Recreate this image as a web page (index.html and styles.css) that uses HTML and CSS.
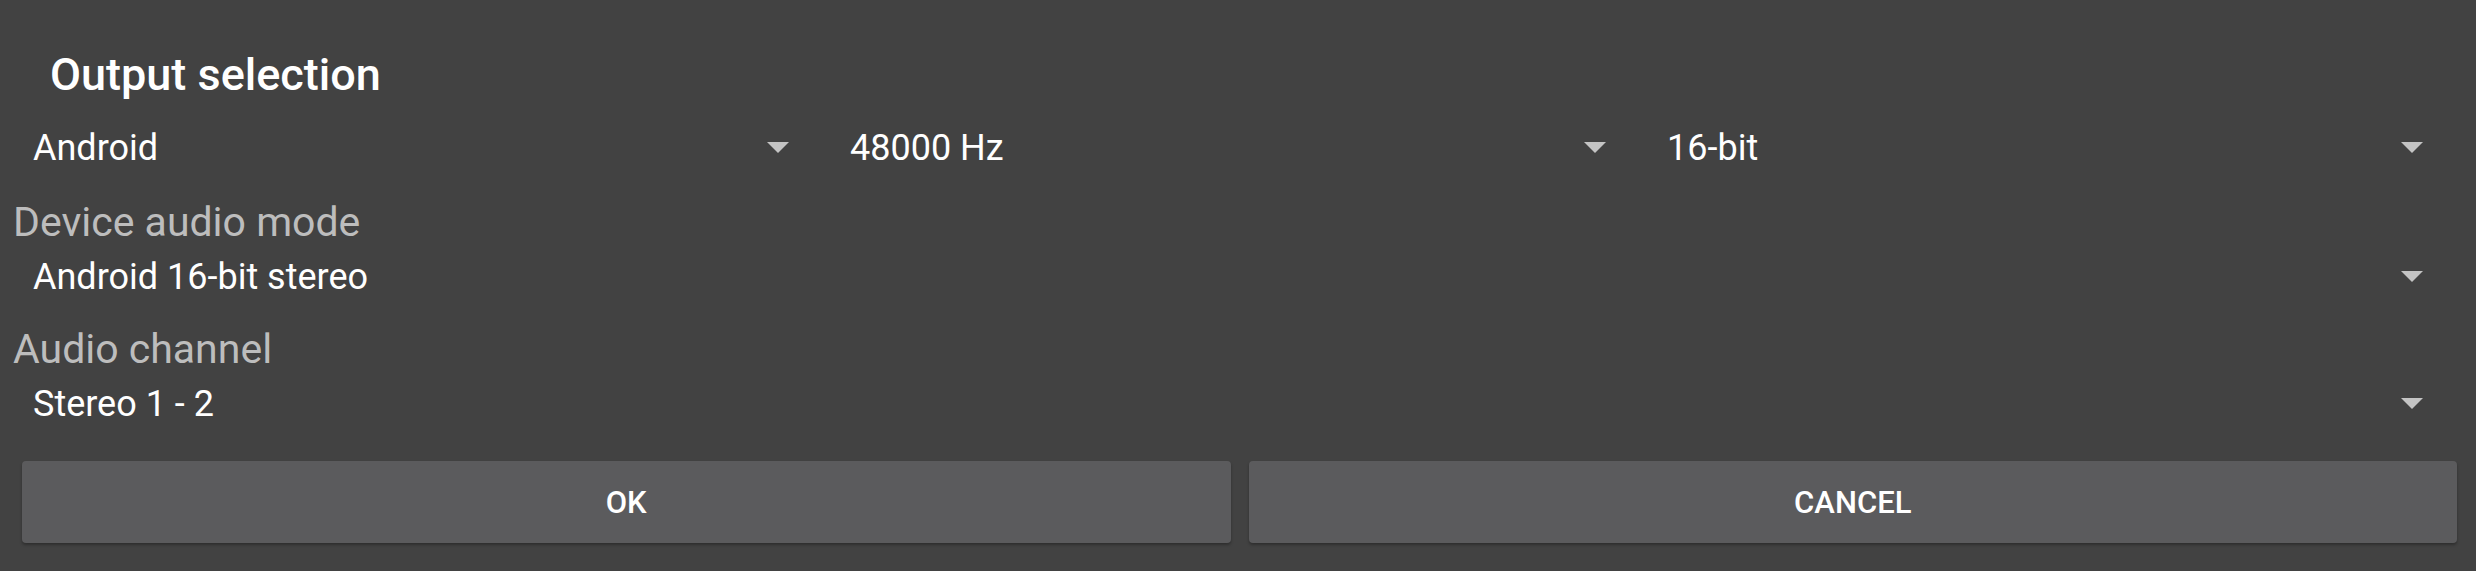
FILE: index.html
```html
<!DOCTYPE html>
<html lang="en">
<head>
  <meta charset="UTF-8">
  <title>Output selection</title>
  <link rel="stylesheet" href="styles.css">
</head>
<body>
  <div class="dialog">
    <h1 class="title">Output selection</h1>

    <div class="spinner-row">
      <div class="spinner">
        <span class="spinner-text">Android</span>
        <span class="arrow"></span>
      </div>
      <div class="spinner">
        <span class="spinner-text">48000 Hz</span>
        <span class="arrow"></span>
      </div>
      <div class="spinner">
        <span class="spinner-text">16-bit</span>
        <span class="arrow"></span>
      </div>
    </div>

    <div class="label">Device audio mode</div>
    <div class="spinner-row">
      <div class="spinner">
        <span class="spinner-text">Android 16-bit stereo</span>
        <span class="arrow"></span>
      </div>
    </div>

    <div class="label label-second">Audio channel</div>
    <div class="spinner-row">
      <div class="spinner">
        <span class="spinner-text">Stereo 1 - 2</span>
        <span class="arrow"></span>
      </div>
    </div>

    <div class="button-bar">
      <button class="dialog-btn">OK</button>
      <button class="dialog-btn">CANCEL</button>
    </div>
  </div>
</body>
</html>
```

FILE: styles.css
```css
body {
  margin: 0;
  background-color: #424242;
  color: #ffffff;
  font-family: Roboto, "Noto Sans", sans-serif;
}

.dialog {
  padding-top: 49px;
  height: 571px;
  box-sizing: border-box;
}

.title {
  margin: 0 0 16px 0;
  padding-left: 50px;
  font-size: 45px;
  line-height: 52px;
  font-weight: 500;
}

.spinner-row {
  display: flex;
  padding: 0 8px 0 17px;
}

.spinner {
  flex: 1;
  display: flex;
  align-items: center;
  height: 60px;
  padding: 0 45px 0 16px;
}

.spinner-text {
  flex: 1;
  font-size: 36px;
  line-height: 60px;
  white-space: nowrap;
  padding-top: 2px;
}

.arrow {
  width: 0;
  height: 0;
  border-left: 11px solid transparent;
  border-right: 11px solid transparent;
  border-top: 11px solid #c4c4c4;
}

.label {
  margin-top: 21px;
  padding-left: 13px;
  font-size: 41px;
  line-height: 48px;
  color: #bdbdbd;
}

.label-second {
  margin-top: 19px;
}

.button-bar {
  display: flex;
  gap: 18px;
  margin-top: 28px;
  padding: 0 19px 0 22px;
}

.dialog-btn {
  flex: 1;
  height: 82px;
  border: none;
  border-radius: 4px;
  background-color: #5b5b5d;
  color: #ffffff;
  font-family: Roboto, "Noto Sans", sans-serif;
  font-size: 31px;
  font-weight: 500;
  box-shadow: 0 2px 3px rgba(0, 0, 0, 0.3);
}
```
